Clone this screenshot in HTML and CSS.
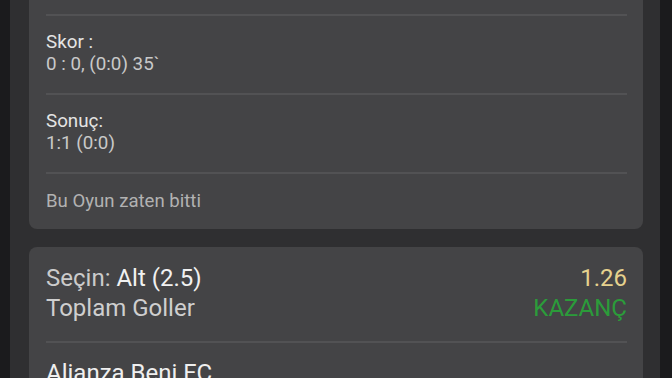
FILE: index.html
```html
<!DOCTYPE html>
<html lang="tr">
<head>
<meta charset="utf-8">
<link rel="stylesheet" href="styles.css">
</head>
<body>
<div class="frame">
  <div class="edge edge-left"></div>
  <main class="content">
    <section class="card card-info">
      <div class="sep"></div>
      <div class="info-row">
        <div class="label">Skor :</div>
        <div class="value">0 : 0, (0:0) 35`</div>
      </div>
      <div class="sep"></div>
      <div class="info-row">
        <div class="label">Sonuç:</div>
        <div class="value">1:1 (0:0)</div>
      </div>
      <div class="sep"></div>
      <div class="info-row note">Bu Oyun zaten bitti</div>
    </section>
    <section class="card card-bet">
      <div class="bet-row">
        <div class="bet-left">
          <div class="pick"><span class="pick-label">Seçin:</span> <span class="pick-value">Alt (2.5)</span></div>
          <div class="market">Toplam Goller</div>
        </div>
        <div class="bet-right">
          <div class="odds">1.26</div>
          <div class="status">KAZANÇ</div>
        </div>
      </div>
      <div class="sep"></div>
      <div class="team">Alianza Beni FC</div>
    </section>
  </main>
  <div class="edge edge-right"></div>
</div>
</body>
</html>
```
FILE: styles.css
```css
* { box-sizing: border-box; }
html, body {
  margin: 0;
  padding: 0;
  height: 100%;
  overflow: hidden;
  background: #2f2f31;
  font-family: Roboto, "Noto Sans", sans-serif;
}
.frame {
  display: flex;
  height: 378px;
  width: 672px;
}
.edge {
  background: #1b1b1d;
  flex: none;
}
.edge-left { width: 10px; }
.edge-right { width: 12px; }
.content {
  flex: 1;
  background: #2f2f31;
  padding: 0 17px 0 19px;
  display: flex;
  flex-direction: column;
  gap: 18px;
  overflow: hidden;
}
.card {
  background: #444446;
  border-radius: 8px;
  padding: 0 16px 0 17px;
  flex: none;
}
.card-info {
  padding-top: 14px;
  border-top-left-radius: 0;
  border-top-right-radius: 0;
}
.sep {
  height: 2px;
  background: #525254;
}
.info-row {
  padding: 15px 0 18px;
  font-size: 18.8px;
  line-height: 22px;
}
.label { color: #e4e4e4; }
.value { color: #c9c9c9; }
.note {
  padding: 17px 0 18px;
  font-size: 18.6px;
  line-height: 20px;
  color: #b2b2b2;
}
.card-bet {
  padding-top: 16px;
}
.bet-row {
  display: flex;
  justify-content: space-between;
  font-size: 24px;
  line-height: 30px;
  padding-bottom: 18px;
}
.pick-label { color: #cbcbcb; }
.pick-value { color: #f1f1f1; }
.market { color: #cfcfcf; }
.bet-right { text-align: right; }
.odds { color: #e6d28e; }
.status { color: #2b9c3a; }
.team {
  padding-top: 15px;
  font-size: 24px;
  line-height: 30px;
  color: #efefef;
}
```
